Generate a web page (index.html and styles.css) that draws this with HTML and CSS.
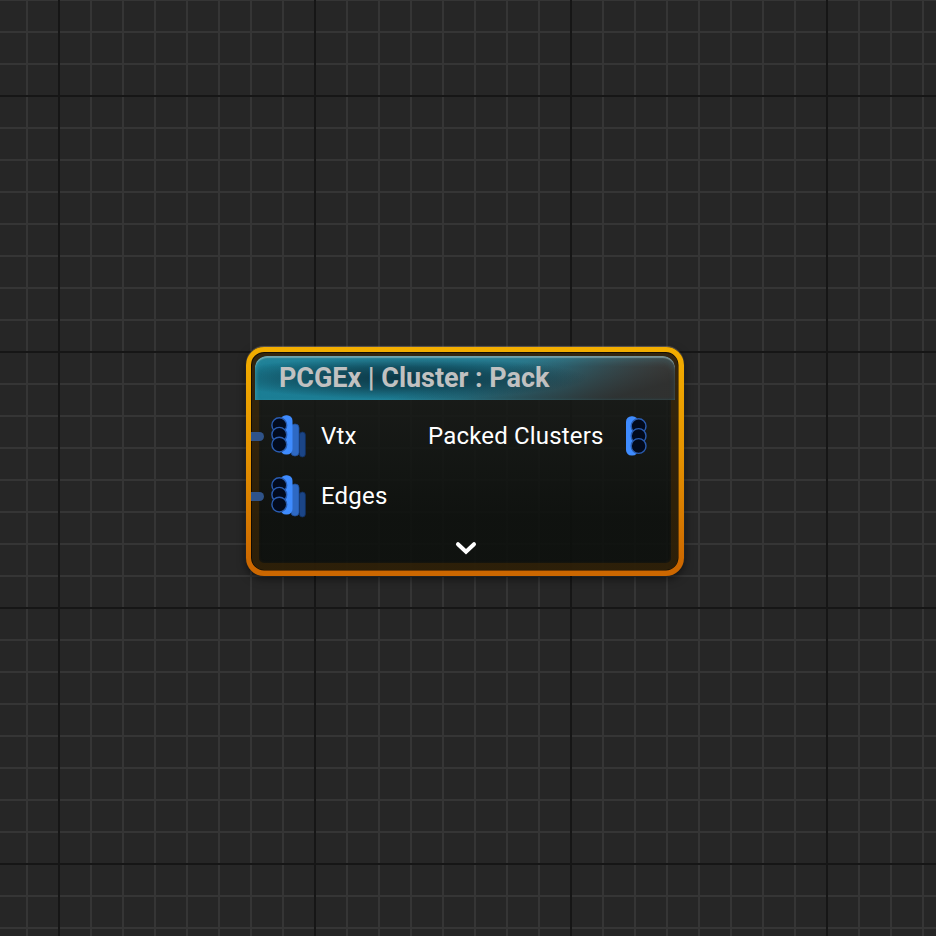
FILE: index.html
```html
<!DOCTYPE html>
<html lang="en">
<head>
<meta charset="utf-8">
<title>PCGEx | Cluster : Pack</title>
<link rel="stylesheet" href="styles.css">
</head>
<body>
<svg class="defs" width="0" height="0" aria-hidden="true">
  <symbol id="pin-in" viewBox="0 0 36 44">
    <rect x="29.4" y="18" width="6" height="25" rx="3" fill="#1b4587" stroke="#12305f" stroke-width=".8"/>
    <rect x="21" y="10" width="8" height="32" rx="3.8" fill="#2e69c4" stroke="#1f4d96" stroke-width=".8"/>
    <rect x="10.5" y="1.2" width="12" height="39.3" rx="5.5" fill="#3f8cff"/>
    <g fill="#020a1d" stroke="#2a5cb0" stroke-width="1.4">
      <circle cx="9.3" cy="11.2" r="7.4"/><circle cx="9.3" cy="20.8" r="7.4"/><circle cx="9.3" cy="30.6" r="7.4"/>
    </g>
  </symbol>
  <symbol id="pin-out" viewBox="0 0 22 42">
    <rect x="1" y="1.2" width="12" height="39.3" rx="5.5" fill="#3f8cff"/>
    <g fill="#020a1d" stroke="#2a5cb0" stroke-width="1.4">
      <circle cx="13.6" cy="11.2" r="7.4"/><circle cx="13.6" cy="21" r="7.4"/><circle cx="13.6" cy="31" r="7.4"/>
    </g>
  </symbol>
</svg>
<main class="graph">
  <section class="node">
    <header class="node-title"><h1>PCGEx | Cluster : Pack</h1></header>
    <div class="pins">
      <div class="row">
        <i class="wire"></i>
        <svg class="pin-in"><use href="#pin-in"/></svg>
        <span class="label input">Vtx</span>
        <span class="label output">Packed Clusters</span>
        <svg class="pin-out"><use href="#pin-out"/></svg>
      </div>
      <div class="row">
        <i class="wire"></i>
        <svg class="pin-in"><use href="#pin-in"/></svg>
        <span class="label input">Edges</span>
      </div>
    </div>
    <svg class="chevron" viewBox="0 0 22 14"><path d="M3 3.2 11 10.8 19 3.2" fill="none" stroke="#fff" stroke-width="4" stroke-linecap="round"/></svg>
  </section>
</main>
</body>
</html>
```

FILE: styles.css
```css
* { box-sizing: border-box; }
body { margin: 0; overflow: hidden; }
.defs { display: block; }
.graph {
  width: 936px;
  height: 936px;
  padding: 347px 0 0 246px;
  background:
    linear-gradient(90deg, #161616 2px, transparent 2px) 58px 0 / 256px 256px,
    linear-gradient(#161616 2px, transparent 2px) 0 95px / 256px 256px,
    linear-gradient(90deg, #353535 2px, transparent 2px) 26px 0 / 32px 32px,
    linear-gradient(#353535 2px, transparent 2px) 0 31px / 32px 32px,
    #262626;
}
.node {
  position: relative;
  display: flex;
  flex-direction: column;
  width: 438px;
  height: 229px;
  padding: 9px;
  border-radius: 18px;
  background: linear-gradient(rgba(27, 29, 26, .86), rgba(18, 21, 18, .88) 45%, rgba(13, 16, 13, .9) 75%);
  box-shadow: 0 -1px 1px rgba(150, 135, 120, .55), 0 3px 9px rgba(0, 0, 0, .5);
}
/* brown glow band inside the selection outline */
.node::after {
  content: "";
  position: absolute;
  inset: 5px;
  border: 8px solid rgba(85, 50, 0, .42);
  border-top-width: 4px;
  border-radius: 13px;
  box-shadow: inset 0 0 3px rgba(85, 50, 0, .25);
  outline: 1px solid rgba(0, 0, 0, .65);
  outline-offset: -1px;
  pointer-events: none;
}
/* selection outline */
.node::before {
  content: "";
  position: absolute;
  z-index: 2;
  inset: 0;
  background: linear-gradient(#f3ae00, #e59400 45%, #cc6700 96%);
  clip-path: path(evenodd, "M18 0H420A18 18 0 0 1 438 18V211A18 18 0 0 1 420 229H18A18 18 0 0 1 0 211V18A18 18 0 0 1 18 0ZM18 5A13 13 0 0 0 5 18V211A13 13 0 0 0 18 223.5H420A13 13 0 0 0 432.5 211V18A13 13 0 0 0 420 5Z");
}
.node-title {
  position: relative;
  z-index: 1;
  display: flex;
  align-items: center;
  height: 44px;
  padding-left: 24px;
  border-radius: 12px 12px 0 0;
  background:
    radial-gradient(ellipse 185px 21px at 35% 50%, rgba(10, 44, 56, .85), rgba(10, 44, 56, .55) 50%, transparent),
    linear-gradient(165deg, rgba(45, 46, 45, 0) 50%, rgba(45, 46, 45, .9) 88%),
    linear-gradient(90deg, #1b7e95, #1e7a91 50%, #2b6c7d 74%, #4a4a49 98%);
  box-shadow: inset 0 2px 1px rgba(165, 190, 190, .55), inset 0 6px 6px rgba(80, 165, 180, .2), inset 2px 0 3px rgba(60, 160, 175, .35);
}
h1 {
  margin: 0;
  color: #c1c1c1;
  font: 700 27px/32px Roboto, sans-serif;
  letter-spacing: -.04px;
  white-space: nowrap;
}
.pins { position: relative; z-index: 1; margin: 6px 0 0 -4px; }
.row { display: flex; align-items: center; height: 60px; }
.wire { width: 13px; height: 9px; border-radius: 0 5px 5px 0; background: #2f5389; }
.pin-in { width: 36px; height: 44px; margin-left: 6px; }
.label { color: #fff; font: 400 24px/30px Roboto, sans-serif; letter-spacing: .18px; white-space: nowrap; }
.input { width: 107px; margin-left: 15px; }
.output { width: 176px; }
.pin-out { width: 22px; height: 42px; margin-left: 21px; }
.chevron { position: relative; z-index: 1; display: block; width: 22px; height: 14px; margin: 15px 0 0 200px; }
```
